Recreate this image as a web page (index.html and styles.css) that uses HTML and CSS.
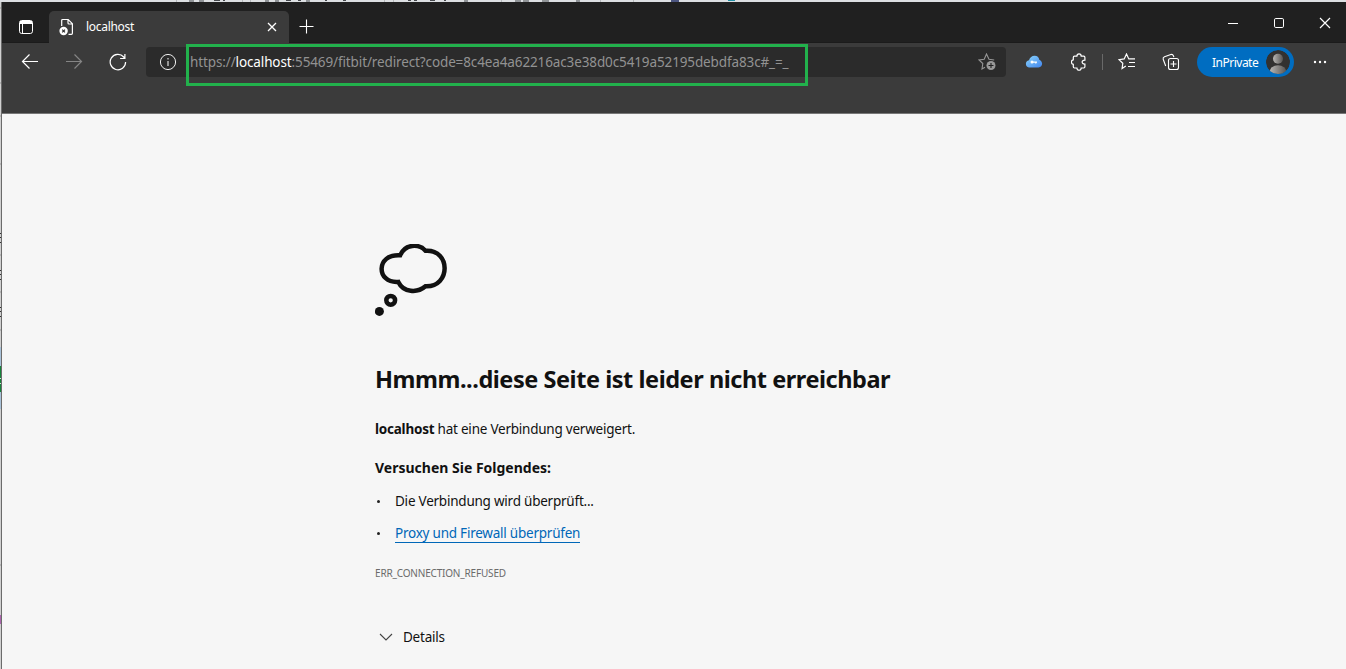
FILE: index.html
```
<!DOCTYPE html>
<html lang="de">
<head>
<meta charset="utf-8">
<title>localhost</title>
<link rel="stylesheet" href="styles.css">
</head>
<body>
<div class="desktop">
  <svg class="behind-top" width="1346" height="2" viewBox="0 0 1346 2">
    <rect width="1346" height="2" fill="#dcdfe2"/>
    <path d="M176.500 0v2M242.500 0v2M250.500 0v2M384.500 0v2M393.500 0v2M501.500 0v2M600.500 0v2M633.500 0v2" stroke="#b5b8bb"/>
    <path d="M189 1h5M199 1h5M214 .5h6M223 .5h2M265 1h4M275 1h4M286 .5h5M298 .5h3M306 1h4M325 .5h2M343 .5h3M408 .5h3M414 .5h3M430 .5h5M444 .5h2M464 1h4M515 1h6M523 1h6M542 1h7M576 1h4" stroke="#45484c" stroke-width="1"/>
    <rect x="671" width="8" height="2" fill="#4c5580"/><rect x="728" width="7" height="1" fill="#218fa4"/>
  </svg>
  <svg class="behind-left" width="1" height="667" viewBox="0 2 1 667">
    <rect y="2" width="1" height="667" fill="#d0d0d0"/>
    <path d="M0 8h1M0 83h1M0 116h1M0 164h1M0 255h1M0 292h1M0 330h1M0 565h1" stroke="#999"/>
    <path d="M0 233.500h1M0 237.500h1M0 242.500h1M0 270.500h1M0 274.500h1M0 279.500h1M0 307.500h1M0 311.500h1M0 316.500h1" stroke="#333"/>
    <rect y="347" width="1" height="62" fill="#a9c2d9"/><rect y="366" width="1" height="26" fill="#16843b"/>
    <path d="M0 378.500h1M0 383.500h1" stroke="#d5e5da"/><rect y="615" width="1" height="9" fill="#ab65ad"/>
  </svg>
  <div class="window">
    <header class="titlebar">
      <div class="tab-actions">
        <svg width="16" height="16" viewBox="0 0 16 16" fill="none" stroke="#fff"><rect x="1.500" y="1.500" width="13" height="13" rx="2.200"/><path d="M2 3.500h12" stroke-width="3"/><path d="M4.500 5v9"/></svg>
      </div>
      <div class="tab">
        <svg class="tab-icon" width="16" height="18" viewBox="0 0 16 18" fill="none" stroke="#fff" stroke-width="1.200"><path d="M2.700 8V2.500q0-1 1-1h5.500l4.200 4.200v9.600q0 1-1 1H9.500M9 1.500v3.500q0 1 1 1h3.400"/><circle cx="4.600" cy="13" r="4.200" fill="#fff" stroke="none"/><path d="m3.200 11.600 2.800 2.800m0-2.800-2.800 2.800" stroke="#333"/></svg>
        <span class="tab-title">localhost</span>
        <svg class="tab-close" width="10" height="10" viewBox="0 0 10 10" stroke="#fff" stroke-width="1.300"><path d="m1 1 8 8m0-8-8 8"/></svg>
      </div>
      <svg class="new-tab" width="16" height="16" viewBox="0 0 16 16" stroke="#fff" stroke-width="1.100"><path d="M7.500 .5v14M.5 7.500h14"/></svg>
      <div class="window-controls">
        <svg width="12" height="12" viewBox="0 0 12 12" fill="none" stroke="#fff"><path d="M1 6.500h10"/></svg>
        <svg width="12" height="12" viewBox="0 0 12 12" fill="none" stroke="#fff"><rect x="1.500" y="1.500" width="9" height="9" rx="1.300"/></svg>
        <svg width="12" height="12" viewBox="0 0 12 12" fill="none" stroke="#fff" stroke-width="1.200"><path d="m1 1 10 10m0-10L1 11"/></svg>
      </div>
    </header>
    <div class="toolbar">
      <div class="navigation">
        <svg width="18" height="18" viewBox="0 0 18 18" fill="none" stroke="#fff" stroke-width="1.200"><path d="M17 8.500H1.500M8.500 1.500l-7 7 7 7"/></svg>
        <svg width="18" height="18" viewBox="0 0 18 18" fill="none" stroke="#858585" stroke-width="1.200"><path d="M1 8.500h15.500M9.500 1.500l7 7-7 7"/></svg>
        <svg width="18" height="18" viewBox="0 0 18 18" fill="none" stroke="#fff" stroke-width="1.200"><path d="M16.600 9A7.700 7.700 0 1 1 14.700 4L15.800 5.300M15.900 1v4.500h-4.800"/></svg>
      </div>
      <div class="address">
        <svg class="info" width="18" height="18" viewBox="0 0 18 18" fill="none" stroke="#eee"><circle cx="9" cy="9" r="7.600"/><path d="M9 8v5M9 5v1.500" stroke="#bbb" stroke-width="1.500"/></svg>
        <span class="url">https://<span class="host">localhost</span>:55469/fitbit/redirect?code=8c4ea4a62216ac3e38d0c5419a52195debdfa83c#_=_</span>
        <svg class="favorite" width="18" height="18" viewBox="0 0 18 18" fill="none" stroke="#969696" stroke-width="1.100"><path d="M7 14.200 4 16l.8-5.500L1 7l5.200-.8L8.500 1l2.500 5.200 5.200.8"/><circle cx="13" cy="12.500" r="4.500" fill="#999" stroke="none"/><path d="M13 10v5m-2.500-2.500h5" stroke="#222"/></svg>
        <span class="highlight"></span>
      </div>
      <svg class="cloud" width="18" height="14" viewBox="0 0 18 14"><defs><linearGradient id="sky" x2="1" y2="1"><stop stop-color="#8bd4fa"/><stop offset="1" stop-color="#4186f0"/></linearGradient></defs><path d="M4 12.500a3.700 3.700 0 0 1 0-7.300C5 2.300 7 .7 9.800.8c2.500 0 4 1.600 4.500 4 4.200 1.800 3.500 7.700-.8 7.700z" fill="url(#sky)"/><circle cx="7" cy="7" r="1.500" fill="#fff"/><path d="M8 7.200h4M10.800 7v1.500" stroke="#fff" stroke-width="1.200"/></svg>
      <svg class="extension" width="16" height="18" viewBox="0 0 16 18" fill="none" stroke="#fff" stroke-width="1.200"><path d="M3.500 3.200h2.400c.1-3 4.200-3 4.300 0h2.500q1.200 0 1.200 1.200v2.700c-3.700-.2-3.700 4.200 0 4v2.700q0 1.200-1.200 1.200h-2.500c-.1 3-4.200 3-4.300 0H3.500q-1.200 0-1.200-1.200v-2.500c-2.500-.2-2.500-4.300 0-4.500V4.500q0-1.300 1.200-1.300"/></svg>
      <span class="separator"></span>
      <svg class="favorites" width="18" height="18" viewBox="0 0 18 18" fill="none" stroke="#fff" stroke-width="1.200"><path d="m7.800 13-3.700 2.500.7-5.200L1 6.600l5.200-.7L8.500 1l2.300 4.900H17M11 9.500h6M10 13.500h7"/></svg>
      <svg class="collections" width="18" height="18" viewBox="0 0 18 18" fill="none" stroke="#fff" stroke-width="1.100"><rect x="6.500" y="5.500" width="10" height="11" rx="2"/><path d="M11.500 8v6m-3-3h6M3.700 13 1.200 6.300Q.7 4.500 2.500 3.700L8.800 1.500q2-.5 2.600 1.300l.5 1.300"/></svg>
      <div class="profile"><span>InPrivate</span><svg width="24" height="24" viewBox="0 0 24 24"><defs><clipPath id="disc"><circle cx="12" cy="12" r="12"/></clipPath><linearGradient id="person"><stop stop-color="#b9b7b4"/><stop offset="1" stop-color="#565452"/></linearGradient></defs><g clip-path="url(#disc)"><circle cx="12" cy="12" r="12" fill="#323130"/><circle cx="12" cy="8.800" r="5" fill="url(#person)"/><ellipse cx="12" cy="22" rx="8.500" ry="6.800" fill="url(#person)"/></g></svg></div>
      <svg class="more" width="14" height="4" viewBox="0 0 14 4" fill="#fff"><circle cx="2" cy="2" r="1.200"/><circle cx="7" cy="2" r="1.200"/><circle cx="12" cy="2" r="1.200"/></svg>
    </div>
    <main class="page">
      <svg class="thought" width="74" height="76" viewBox="0 0 74 76" fill="none" stroke="#111" stroke-width="4.500"><path d="M25.200 11.200C30 -.3 44 -.5 50.500 6.700 76 5 76 43.500 50.500 42.300 42 49.500 28.500 48.500 23.300 37.900 1 39.500 .5 9.500 25.200 11.200z"/><circle cx="15.700" cy="56.300" r="4.400"/><circle cx="4.400" cy="67.400" r="4.500" fill="#111" stroke="none"/></svg>
      <h1>Hmmm...diese Seite ist leider nicht erreichbar</h1>
      <p class="reason"><strong>localhost</strong> <span>hat eine Verbindung verweigert.</span></p>
      <h2>Versuchen Sie Folgendes:</h2>
      <ul>
        <li><span class="check">Die Verbindung wird überprüft...</span></li>
        <li><a class="link">Proxy und Firewall überprüfen</a></li>
      </ul>
      <p class="code">ERR_CONNECTION_REFUSED</p>
      <div class="details"><svg width="14" height="9" viewBox="0 0 14 9" fill="none" stroke="#444" stroke-width="1.100"><path d="m1 1 6 6 6-6"/></svg><span>Details</span></div>
    </main>
  </div>
</div>
</body>
</html>
```
FILE: styles.css
```
* { box-sizing: border-box; }
body { margin: 0; font-family: "Noto Sans", "Open Sans", sans-serif; }
svg { display: block; flex: none; }
.desktop { width: 1346px; height: 669px; overflow: hidden; display: grid; grid-template: 2px 667px / 1px 1345px; }
.behind-top { grid-column: 1 / 3; }
.window { border-left: 1px solid #6b6b6b; background: #f6f6f6; display: flex; flex-direction: column; }
.titlebar { height: 41px; flex: none; background: #202020; display: flex; align-items: flex-end; border-bottom: 1px solid #1b1b1b; }
.tab-actions { width: 47px; height: 32px; padding: 0 0 0 16px; }
.tab { width: 240px; height: 32px; margin-bottom: -1px; background: #3b3b3b; border-radius: 5px 5px 0 0; display: flex; align-items: center; padding: 0 12px 0 10px; }
.tab-actions svg { margin-top: 9px; }
.tab-title { font-size: 12px; color: #fff; letter-spacing: -0.3px; margin-left: 11px; flex: 1; line-height: 32px; }
.new-tab { margin: 0 0 7px 10px; }
.window-controls { margin-left: auto; display: flex; gap: 34px; padding: 0 15px 13px 0; }
.toolbar { height: 71px; flex: none; background: #3b3b3b; border-bottom: 1px solid #777; display: flex; align-items: center; padding-bottom: 32px; }
.navigation { width: 144px; display: flex; gap: 26px; padding-left: 19px; }
.address { position: relative; width: 860px; height: 30px; background: #2b2b2b; border-radius: 4px; display: flex; align-items: center; padding: 0 10px 0 13px; }
.url { font-size: 13.500px; letter-spacing: -0.120px; color: #929292; margin-left: 13px; white-space: nowrap; }
.host { color: #fff; }
.favorite { margin-left: auto; }
.highlight { position: absolute; left: 40px; top: -3px; width: 622px; height: 42px; border: 3px solid #22b14c; }
.cloud { margin-left: 19px; }
.extension { margin-left: 28px; }
.separator { width: 1px; height: 16px; background: #696969; margin-left: 15px; }
.favorites { margin-left: 15px; }
.collections { margin-left: 26px; }
.profile { width: 97px; height: 30px; border-radius: 15px; background: #006dc1; color: #fff; margin-left: 17px; display: flex; align-items: center; padding: 0 4px 0 15px; font-size: 12px; letter-spacing: -0.55px; justify-content: space-between; }
.profile { letter-spacing: -0.5px; }
.more { margin-left: 19px; }
.page { padding: 130px 0 0 373px; color: #111; font-size: 13.500px; letter-spacing: -0.23px; }
h1 { font-size: 23.500px; line-height: 32px; letter-spacing: -0.45px; margin: 43px 0 0; font-weight: 700; white-space: nowrap; }
p, h2, ul { margin: 0; }
.reason { line-height: 20px; margin-top: 24px; }
h2 { font-size: 14px; line-height: 20px; font-weight: 700; letter-spacing: 0; margin-top: 19px; }
ul { list-style: none; padding: 0; margin-top: 9px; }
li { height: 32px; line-height: 28px; display: flex; align-items: flex-start; }
li::before { content: ""; width: 3px; height: 3px; border-radius: 50%; background: #222; margin: 13px 15px 0 2px; }
.link { color: #0067b8; line-height: 20px; border-bottom: 1px solid #0067b8; margin-top: 4px; height: 20px; }
.code { font-size: 10px; line-height: 16px; letter-spacing: -0.18px; color: #6b6b6b; margin-top: 14px; }
.details { display: flex; align-items: center; height: 24px; margin-top: 44px; padding-left: 4px; gap: 10px; letter-spacing: -0.23px; }
```
